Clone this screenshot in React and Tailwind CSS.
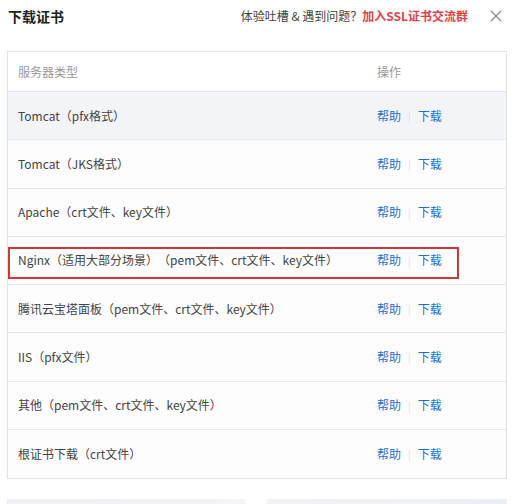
import React from 'react';

const rows = [
  'Tomcat（pfx格式）',
  'Tomcat（JKS格式）',
  'Apache（crt文件、key文件）',
  'Nginx（适用大部分场景）（pem文件、crt文件、key文件）',
  '腾讯云宝塔面板（pem文件、crt文件、key文件）',
  'IIS（pfx文件）',
  '其他（pem文件、crt文件、key文件）',
  '根证书下载（crt文件）',
];

const font = { fontFamily: '"Noto Sans CJK SC", "Noto Sans", sans-serif' };

export default function App() {
  return (
    <div className="w-[519px] h-[504px] bg-white overflow-hidden relative [text-spacing-trim:space-all]" style={font}>
      {/* Header */}
      <div className="flex items-center h-[31px] pl-[8px] pr-[17px]">
        <div className="text-[14px] font-semibold text-[#222] leading-none">下载证书</div>
        <div className="ml-auto flex items-center text-[12px] leading-none">
          <span className="text-[#444]">体验吐槽 &amp; 遇到问题？</span>
          <span className="text-[#e0414b] font-semibold">加入SSL证书交流群</span>
        </div>
        <svg className="ml-[22px]" width="12" height="12" viewBox="0 0 12 12">
          <path d="M1 1 L11 11 M11 1 L1 11" stroke="#888" strokeWidth="1.3" />
        </svg>
      </div>

      {/* Table */}
      <div className="mt-[20px] mx-[7px] w-[500px] border border-[#e2e2e2] relative">
        <div className="flex items-center h-[40px] border-b border-[#e2e2e2] text-[12px] text-[#999]">
          <div className="pl-[10px] w-[369px]">服务器类型</div>
          <div>操作</div>
        </div>
        {rows.map((r, i) => (
          <div
            key={i}
            className={
              'flex items-center h-[48.25px] text-[12px] ' +
              (i < rows.length - 1 ? 'border-b border-[#e8e8e8] ' : '') +
              (i === 0 ? 'bg-[#f3f4f7]' : 'bg-[#fdfdfd]')
            }
          >
            <div className="pl-[10px] w-[369px] text-[#444] whitespace-nowrap">{r}</div>
            <div className="flex items-center text-[#1f6fd6]">
              <span>帮助</span>
              <span className="mx-[7px] text-[#ddd] text-[10px]">|</span>
              <span>下载</span>
            </div>
          </div>
        ))}
        {/* highlight annotation */}
        <div className="absolute left-[0px] top-[195px] w-[451px] h-[32px] border-2 border-[#d2363c]" />
      </div>

      {/* bottom partially visible cards */}
      <div className="mt-[20px] mx-[7px] flex gap-[22px]">
        <div className="w-[238px] h-[20px] bg-gradient-to-r from-[#eef0f5] to-[#f4f5f8]" />
        <div className="w-[240px] h-[20px] bg-gradient-to-r from-[#f2f3f7] to-[#eceff5]" />
      </div>
    </div>
  );
}
